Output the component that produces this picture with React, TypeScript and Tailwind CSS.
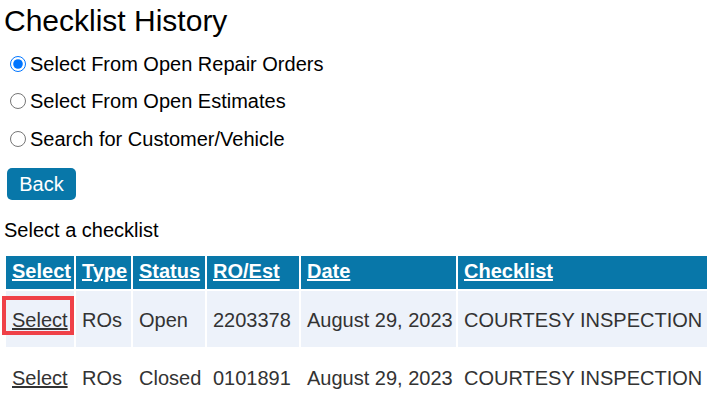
import React from "react";

const rows = [
  { type: "ROs", status: "Open", ro: "2203378", date: "August 29, 2023", checklist: "COURTESY INSPECTION", shaded: true, marked: true },
  { type: "ROs", status: "Closed", ro: "0101891", date: "August 29, 2023", checklist: "COURTESY INSPECTION", shaded: false, marked: false },
];

const options = [
  { label: "Select From Open Repair Orders", checked: true },
  { label: "Select From Open Estimates", checked: false },
  { label: "Search for Customer/Vehicle", checked: false },
];

export default function App() {
  return (
    <div className="min-h-screen bg-white pl-[4px] text-[20px] text-black font-['Liberation_Sans',Arial,sans-serif] overflow-hidden">
      <h1 className="pt-[3px] text-[30px] leading-[36px] font-normal">Checklist History</h1>

      {/* Source picker */}
      <div className="mt-[6px] flex flex-col">
        {options.map((opt) => (
          <label key={opt.label} className="flex h-[37.5px] items-center">
            <input
              type="radio"
              name="source"
              defaultChecked={opt.checked}
              className="ml-[6px] mr-[4px] h-[16px] w-[16px] accent-[#0075ff]"
            />
            <span className="leading-[23px] pt-[1px]">{opt.label}</span>
          </label>
        ))}
      </div>

      <button className="mt-[10px] ml-[3px] flex h-[32px] w-[69px] items-center justify-center rounded-[5px] bg-[#0877a9] text-[20px] leading-none text-white">
        Back
      </button>

      <p className="mt-[19.5px] leading-[23px]">Select a checklist</p>

      <table className="mt-[11.5px] w-[724px] table-fixed border-separate border-spacing-[2.5px] text-left">
        <thead>
          <tr className="h-[33px] bg-[#0877a9] text-white font-bold">
            <th className="w-[68px] px-[6px] pb-[2px] align-middle"><a href="#" className="underline">Select</a></th>
            <th className="w-[55px] px-[6px] pb-[2px] align-middle"><a href="#" className="underline">Type</a></th>
            <th className="w-[72px] px-[6px] pb-[2px] align-middle"><a href="#" className="underline">Status</a></th>
            <th className="w-[92px] px-[6px] pb-[2px] align-middle"><a href="#" className="underline">RO/Est</a></th>
            <th className="w-[155px] px-[6px] pb-[2px] align-middle"><a href="#" className="underline">Date</a></th>
            <th className="px-[6px] pb-[2px] align-middle"><a href="#" className="underline">Checklist</a></th>
          </tr>
        </thead>
        <tbody className="text-[#333333]">
          {rows.map((r) => (
            <tr key={r.ro} className={`h-[56px] ${r.shaded ? "bg-[#edf2fa]" : "bg-white"}`}>
              <td className="relative px-[6px] pt-[2px] align-middle">
                <a href="#" className="underline decoration-[1.5px]">Select</a>
                {r.marked && (
                  <span className="absolute left-[-4px] top-[5px] h-[39px] w-[72px] border-[4px] border-[#ef4148]" />
                )}
              </td>
              <td className="px-[6px] pt-[2px] align-middle">{r.type}</td>
              <td className="px-[6px] pt-[2px] align-middle">{r.status}</td>
              <td className="px-[6px] pt-[2px] align-middle">{r.ro}</td>
              <td className="px-[6px] pt-[2px] align-middle whitespace-nowrap">{r.date}</td>
              <td className="px-[6px] pt-[2px] align-middle whitespace-nowrap">{r.checklist}</td>
            </tr>
          ))}
        </tbody>
      </table>
    </div>
  );
}
